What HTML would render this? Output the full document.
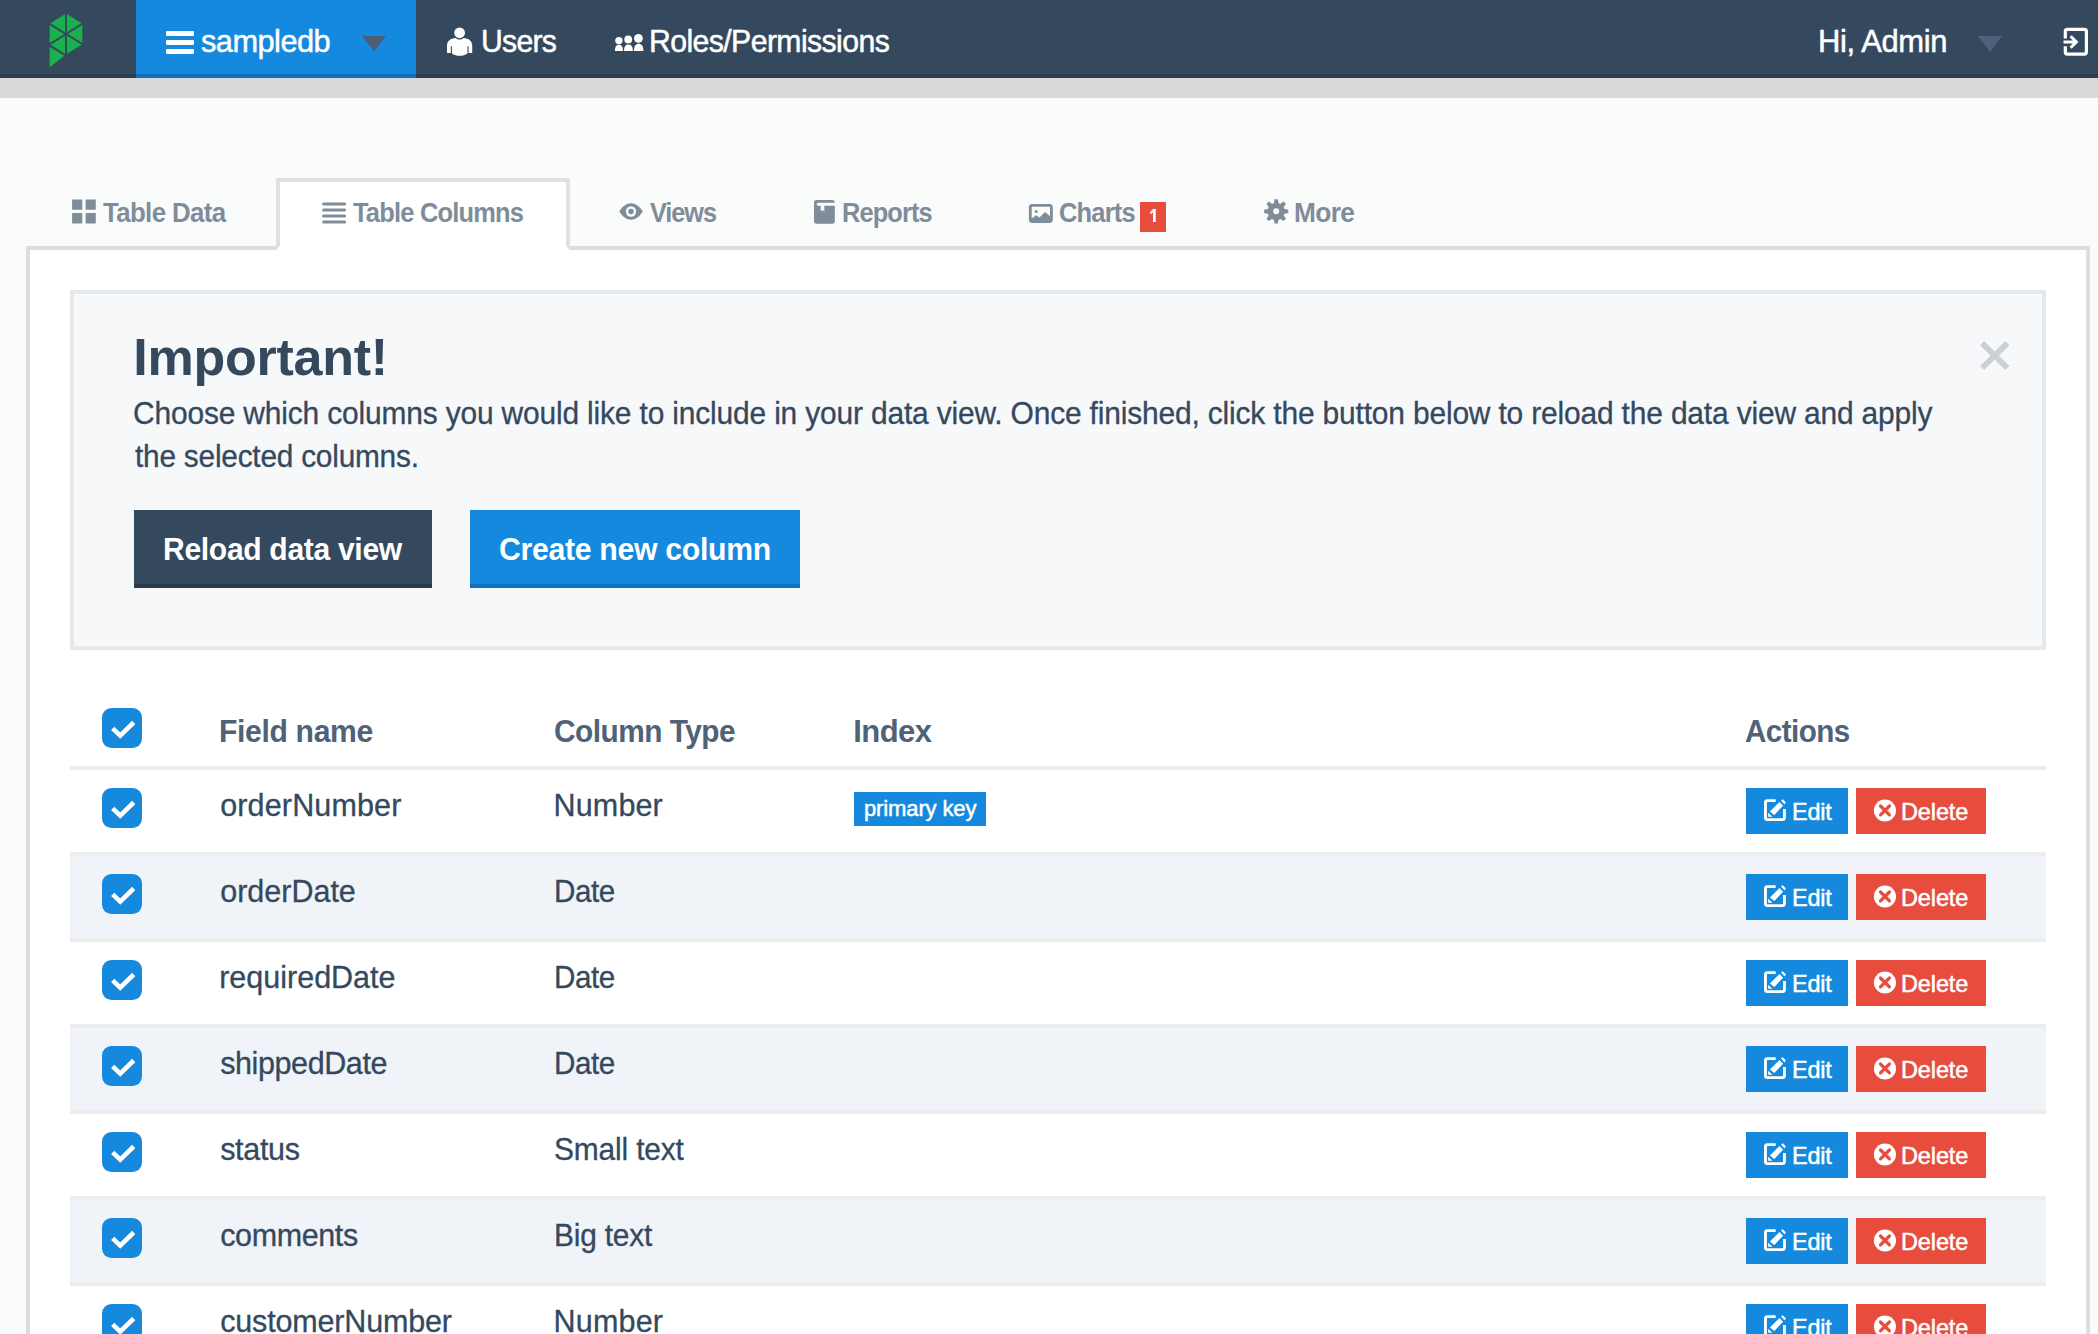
<!DOCTYPE html>
<html><head><meta charset="utf-8"><style>
html,body{margin:0;padding:0}
body{width:2098px;height:1334px;overflow:hidden;position:relative;background:#fafbfb;font-family:"Liberation Sans", sans-serif}
.t{position:absolute;white-space:nowrap;line-height:1}
svg{display:block;overflow:visible}
</style></head><body>
<div style="position:absolute;left:0px;top:0px;width:2098px;height:74px;background:#34495e;"></div>
<div style="position:absolute;left:0px;top:74px;width:2098px;height:4px;background:#2b3b4c;"></div>
<div style="position:absolute;left:136px;top:0px;width:280px;height:74px;background:#1489dd;"></div>
<div style="position:absolute;left:136px;top:74px;width:280px;height:4px;background:#1172bb;"></div>
<div style="position:absolute;left:0px;top:78px;width:2098px;height:20px;background:#d8d9d9;"></div>
<svg style="position:absolute;left:0px;top:0px" width="100" height="80"><g fill="#1ab04b" stroke="#34495e" stroke-width="1.9" stroke-linejoin="round"><polygon points="66,34 66,12.5 83.3,23.2"/><polygon points="66,34 83.3,23.2 83.3,44.8"/><polygon points="66,34 83.3,44.8 66,55.5"/><polygon points="66,34 66,55.5 48.7,44.8"/><polygon points="66,34 48.7,44.8 48.7,23.2"/><polygon points="66,34 48.7,23.2 66,12.5"/><polygon points="48.7,45.3 66,55.8 48.7,69.3"/></g></svg>
<div style="position:absolute;left:166px;top:31px;width:28px;height:5.299999999999997px;background:#fff;border-radius:1.2px"></div>
<div style="position:absolute;left:166px;top:40px;width:28px;height:5.299999999999997px;background:#fff;border-radius:1.2px"></div>
<div style="position:absolute;left:166px;top:49px;width:28px;height:5.299999999999997px;background:#fff;border-radius:1.2px"></div>
<svg style="position:absolute;left:361px;top:35px" width="26" height="17"><polygon points="1,1 25,1 13,16.5" fill="#4a5e76"/></svg>
<svg style="position:absolute;left:446px;top:27px" width="28" height="30"><circle cx="13.6" cy="5.8" r="5.4" fill="#fff"/><path d="M1,26 L1,18.5 C1,14.2 4.5,11.2 9.6,11 C11,12.1 12.3,12.6 13.6,12.6 C14.9,12.6 16.2,12.1 17.6,11 C22.7,11.2 26.2,14.2 26.2,18.5 L26.2,26 L22.6,26 L22.6,19.3 L21.5,19.3 L21.5,26.5 C19.5,28.3 16.5,28.8 13.6,28.8 C10.7,28.8 7.7,28.3 5.9,26.5 L5.9,19.3 L4.8,19.3 L4.8,26 Z" fill="#fff"/></svg>
<svg style="position:absolute;left:614px;top:33px" width="32" height="20"><g fill="#fff"><circle cx="4.9" cy="7.6" r="3.7"/><circle cx="14.2" cy="6.4" r="3.9"/><circle cx="24.4" cy="5.35" r="4.4"/><path d="M0.9,18 C0.9,13.5 2.6,11.8 4.95,11.8 C7.3,11.8 9,13.5 9,18 Z"/><path d="M10,18 C10,13.3 11.9,11.6 14.45,11.6 C17,11.6 18.9,13.3 18.9,18 Z"/><path d="M19.9,18 C19.9,12.6 22,10.7 24.65,10.7 C27.3,10.7 29.4,12.6 29.4,18 Z"/></g></svg>
<svg style="position:absolute;left:1977px;top:35px" width="26" height="18"><polygon points="1,1 25,1 13,17" fill="#4e627a"/></svg>
<svg style="position:absolute;left:2062px;top:27px" width="28" height="30"><path d="M3.3,11.4 L3.3,4.4 Q3.3,2.4 5.3,2.4 L22.4,2.4 Q24.4,2.4 24.4,4.4 L24.4,25.1 Q24.4,27.1 22.4,27.1 L5.3,27.1 Q3.3,27.1 3.3,25.1 L3.3,19.2" fill="none" stroke="#fff" stroke-width="3.2"/><path d="M1.5,15 L14,15 M8.6,9.2 L14.4,15 L8.6,20.8" fill="none" stroke="#fff" stroke-width="3"/></svg>
<div style="position:absolute;left:26px;top:246px;width:2064px;height:1154px;background:#fff;box-sizing:border-box;border:4px solid #dddddd;"></div>
<div style="position:absolute;left:276px;top:178px;width:294px;height:72px;background:#fff;box-sizing:border-box;border:4px solid #dfe2e5;border-bottom:4px solid #fff;"></div>
<svg style="position:absolute;left:71px;top:199px" width="26" height="26"><g fill="#7f8c99"><rect x="1.1" y="0.5" width="10.2" height="10.3" rx="0.6"/><rect x="14.6" y="0.5" width="10.2" height="10.3" rx="0.6"/><rect x="1.1" y="14.1" width="10.2" height="10.3" rx="0.6"/><rect x="14.6" y="14.1" width="10.2" height="10.3" rx="0.6"/></g></svg>
<svg style="position:absolute;left:321px;top:201px" width="27" height="24"><g fill="#7f8c99"><rect x="1.1" y="1.45" width="24" height="3.1" rx="1.5"/><rect x="1.1" y="7.45" width="24" height="3.1" rx="1.5"/><rect x="1.1" y="13.45" width="24" height="3.1" rx="1.5"/><rect x="1.1" y="19.45" width="24" height="3.1" rx="1.5"/></g></svg>
<svg style="position:absolute;left:619px;top:203px" width="25" height="18"><path d="M0.3,8.5 C3.5,3.3 7.5,0.3 12,0.3 C16.5,0.3 20.5,3.3 23.7,8.5 C20.5,13.7 16.5,16.7 12,16.7 C7.5,16.7 3.5,13.7 0.3,8.5 Z" fill="#7f8c99"/><circle cx="12" cy="8.5" r="5.2" fill="#fafbfb"/><circle cx="12" cy="8.5" r="2.7" fill="#7f8c99"/></svg>
<svg style="position:absolute;left:808px;top:194px" width="30" height="32"><rect x="6" y="5.9" width="20.8" height="23.8" rx="2.6" fill="#7f8c99"/><path d="M10.2,8.7 L28,8.7 L28,11.7 L16.3,11.7 L16.3,17.6 L14.5,16 L12.7,17.6 L12.7,11.7 L10.2,11.7 Q8.7,11.7 8.7,10.2 Q8.7,8.7 10.2,8.7Z" fill="#fafbfb"/></svg>
<svg style="position:absolute;left:1024px;top:196px" width="32" height="30"><rect x="6.3" y="9.35" width="21.1" height="16.1" rx="2" fill="none" stroke="#7f8c99" stroke-width="2.85"/><circle cx="12.2" cy="15.4" r="1.5" fill="#7f8c99"/><path d="M6.3,23.5 L12.2,19.3 L15.4,21.6 L21.1,15.9 L26.4,20.4 L26.4,25.5 L6.3,25.5Z" fill="#7f8c99"/></svg>
<div style="position:absolute;left:1140px;top:202px;width:26px;height:30px;background:#e74c3c;"></div>
<svg style="position:absolute;left:1140px;top:202px" width="26" height="30"><path d="M13,7 L15.7,7 L15.7,20 L13,20 L13,10.6 L10.9,12.3 L9.8,10.6 Z" fill="#fff"/></svg>
<svg style="position:absolute;left:1263px;top:199px" width="27" height="27"><g transform="translate(13.2,12.3)" fill="#7f8c99"><circle r="8.6"/><polygon points="-2.6,-7.5 2.6,-7.5 1.6,-12.1 -1.6,-12.1" transform="rotate(0)"/><polygon points="-2.6,-7.5 2.6,-7.5 1.6,-12.1 -1.6,-12.1" transform="rotate(45)"/><polygon points="-2.6,-7.5 2.6,-7.5 1.6,-12.1 -1.6,-12.1" transform="rotate(90)"/><polygon points="-2.6,-7.5 2.6,-7.5 1.6,-12.1 -1.6,-12.1" transform="rotate(135)"/><polygon points="-2.6,-7.5 2.6,-7.5 1.6,-12.1 -1.6,-12.1" transform="rotate(180)"/><polygon points="-2.6,-7.5 2.6,-7.5 1.6,-12.1 -1.6,-12.1" transform="rotate(225)"/><polygon points="-2.6,-7.5 2.6,-7.5 1.6,-12.1 -1.6,-12.1" transform="rotate(270)"/><polygon points="-2.6,-7.5 2.6,-7.5 1.6,-12.1 -1.6,-12.1" transform="rotate(315)"/><circle r="3" fill="#fafbfb"/></g></svg>
<div style="position:absolute;left:70px;top:290px;width:1976px;height:360px;background:#f7f8fa;box-sizing:border-box;border:4px solid #e6e9ec;"></div>
<svg style="position:absolute;left:1979px;top:340px" width="32" height="32"><path d="M3.1,3.1 L28.4,28 M28.4,3.1 L3.1,28" stroke="#ccd0d6" stroke-width="5.8"/></svg>
<div style="position:absolute;left:134px;top:510px;width:298px;height:78px;background:#34495e;box-sizing:border-box;border-bottom:4px solid #2c3b4b;"></div>
<div style="position:absolute;left:470px;top:510px;width:330px;height:78px;background:#1489dd;box-sizing:border-box;border-bottom:4px solid #1172bb;"></div>
<svg style="position:absolute;left:102px;top:708px" width="40" height="40"><rect x="0" y="0" width="40" height="40" rx="9.5" fill="#1489dd"/><polyline points="10.7,20.3 18.2,27.6 31.7,14.5" fill="none" stroke="#fff" stroke-width="4.6"/></svg>
<div style="position:absolute;left:70px;top:766px;width:1976px;height:4px;background:#eceeee;"></div>
<div style="position:absolute;left:70px;top:852px;width:1976px;height:4px;background:#eceeee;"></div>
<svg style="position:absolute;left:102px;top:788px" width="40" height="40"><rect x="0" y="0" width="40" height="40" rx="9.5" fill="#1489dd"/><polyline points="10.7,20.3 18.2,27.6 31.7,14.5" fill="none" stroke="#fff" stroke-width="4.6"/></svg>
<div style="position:absolute;left:1746px;top:788px;width:102px;height:46px;background:#1489dd;"></div>
<svg style="position:absolute;left:1760px;top:796px" width="30" height="28"><path d="M15.7,4.6 L7.4,4.6 Q5.45,4.6 5.45,6.6 L5.45,21.6 Q5.45,23.65 7.4,23.65 L22.5,23.65 Q24.45,23.65 24.45,21.6 L24.45,13" fill="none" stroke="#fff" stroke-width="2.9"/><polygon points="9.87,15.5 19.5,6.1 23.1,9.66 14.3,18.9" fill="#fff"/><polygon points="8.1,16.8 8.1,20.8 12.6,20.8" fill="#fff"/><polygon points="21,4.4 22.7,3.15 25.8,6.3 24.6,8.4" fill="#fff"/></svg>
<div style="position:absolute;left:1856px;top:788px;width:130px;height:46px;background:#e74c3c;"></div>
<svg style="position:absolute;left:1870px;top:796px" width="30" height="28"><circle cx="14.95" cy="14.45" r="11.05" fill="#fff"/><path d="M10.5,10 L19.4,18.9 M19.4,10 L10.5,18.9" stroke="#e74c3c" stroke-width="3.2" stroke-linecap="round"/></svg>
<div style="position:absolute;left:70px;top:856px;width:1976px;height:82px;background:#f0f3f7;"></div>
<div style="position:absolute;left:70px;top:938px;width:1976px;height:4px;background:#eceeee;"></div>
<svg style="position:absolute;left:102px;top:874px" width="40" height="40"><rect x="0" y="0" width="40" height="40" rx="9.5" fill="#1489dd"/><polyline points="10.7,20.3 18.2,27.6 31.7,14.5" fill="none" stroke="#fff" stroke-width="4.6"/></svg>
<div style="position:absolute;left:1746px;top:874px;width:102px;height:46px;background:#1489dd;"></div>
<svg style="position:absolute;left:1760px;top:882px" width="30" height="28"><path d="M15.7,4.6 L7.4,4.6 Q5.45,4.6 5.45,6.6 L5.45,21.6 Q5.45,23.65 7.4,23.65 L22.5,23.65 Q24.45,23.65 24.45,21.6 L24.45,13" fill="none" stroke="#fff" stroke-width="2.9"/><polygon points="9.87,15.5 19.5,6.1 23.1,9.66 14.3,18.9" fill="#fff"/><polygon points="8.1,16.8 8.1,20.8 12.6,20.8" fill="#fff"/><polygon points="21,4.4 22.7,3.15 25.8,6.3 24.6,8.4" fill="#fff"/></svg>
<div style="position:absolute;left:1856px;top:874px;width:130px;height:46px;background:#e74c3c;"></div>
<svg style="position:absolute;left:1870px;top:882px" width="30" height="28"><circle cx="14.95" cy="14.45" r="11.05" fill="#fff"/><path d="M10.5,10 L19.4,18.9 M19.4,10 L10.5,18.9" stroke="#e74c3c" stroke-width="3.2" stroke-linecap="round"/></svg>
<div style="position:absolute;left:70px;top:1024px;width:1976px;height:4px;background:#eceeee;"></div>
<svg style="position:absolute;left:102px;top:960px" width="40" height="40"><rect x="0" y="0" width="40" height="40" rx="9.5" fill="#1489dd"/><polyline points="10.7,20.3 18.2,27.6 31.7,14.5" fill="none" stroke="#fff" stroke-width="4.6"/></svg>
<div style="position:absolute;left:1746px;top:960px;width:102px;height:46px;background:#1489dd;"></div>
<svg style="position:absolute;left:1760px;top:968px" width="30" height="28"><path d="M15.7,4.6 L7.4,4.6 Q5.45,4.6 5.45,6.6 L5.45,21.6 Q5.45,23.65 7.4,23.65 L22.5,23.65 Q24.45,23.65 24.45,21.6 L24.45,13" fill="none" stroke="#fff" stroke-width="2.9"/><polygon points="9.87,15.5 19.5,6.1 23.1,9.66 14.3,18.9" fill="#fff"/><polygon points="8.1,16.8 8.1,20.8 12.6,20.8" fill="#fff"/><polygon points="21,4.4 22.7,3.15 25.8,6.3 24.6,8.4" fill="#fff"/></svg>
<div style="position:absolute;left:1856px;top:960px;width:130px;height:46px;background:#e74c3c;"></div>
<svg style="position:absolute;left:1870px;top:968px" width="30" height="28"><circle cx="14.95" cy="14.45" r="11.05" fill="#fff"/><path d="M10.5,10 L19.4,18.9 M19.4,10 L10.5,18.9" stroke="#e74c3c" stroke-width="3.2" stroke-linecap="round"/></svg>
<div style="position:absolute;left:70px;top:1028px;width:1976px;height:82px;background:#f0f3f7;"></div>
<div style="position:absolute;left:70px;top:1110px;width:1976px;height:4px;background:#eceeee;"></div>
<svg style="position:absolute;left:102px;top:1046px" width="40" height="40"><rect x="0" y="0" width="40" height="40" rx="9.5" fill="#1489dd"/><polyline points="10.7,20.3 18.2,27.6 31.7,14.5" fill="none" stroke="#fff" stroke-width="4.6"/></svg>
<div style="position:absolute;left:1746px;top:1046px;width:102px;height:46px;background:#1489dd;"></div>
<svg style="position:absolute;left:1760px;top:1054px" width="30" height="28"><path d="M15.7,4.6 L7.4,4.6 Q5.45,4.6 5.45,6.6 L5.45,21.6 Q5.45,23.65 7.4,23.65 L22.5,23.65 Q24.45,23.65 24.45,21.6 L24.45,13" fill="none" stroke="#fff" stroke-width="2.9"/><polygon points="9.87,15.5 19.5,6.1 23.1,9.66 14.3,18.9" fill="#fff"/><polygon points="8.1,16.8 8.1,20.8 12.6,20.8" fill="#fff"/><polygon points="21,4.4 22.7,3.15 25.8,6.3 24.6,8.4" fill="#fff"/></svg>
<div style="position:absolute;left:1856px;top:1046px;width:130px;height:46px;background:#e74c3c;"></div>
<svg style="position:absolute;left:1870px;top:1054px" width="30" height="28"><circle cx="14.95" cy="14.45" r="11.05" fill="#fff"/><path d="M10.5,10 L19.4,18.9 M19.4,10 L10.5,18.9" stroke="#e74c3c" stroke-width="3.2" stroke-linecap="round"/></svg>
<div style="position:absolute;left:70px;top:1196px;width:1976px;height:4px;background:#eceeee;"></div>
<svg style="position:absolute;left:102px;top:1132px" width="40" height="40"><rect x="0" y="0" width="40" height="40" rx="9.5" fill="#1489dd"/><polyline points="10.7,20.3 18.2,27.6 31.7,14.5" fill="none" stroke="#fff" stroke-width="4.6"/></svg>
<div style="position:absolute;left:1746px;top:1132px;width:102px;height:46px;background:#1489dd;"></div>
<svg style="position:absolute;left:1760px;top:1140px" width="30" height="28"><path d="M15.7,4.6 L7.4,4.6 Q5.45,4.6 5.45,6.6 L5.45,21.6 Q5.45,23.65 7.4,23.65 L22.5,23.65 Q24.45,23.65 24.45,21.6 L24.45,13" fill="none" stroke="#fff" stroke-width="2.9"/><polygon points="9.87,15.5 19.5,6.1 23.1,9.66 14.3,18.9" fill="#fff"/><polygon points="8.1,16.8 8.1,20.8 12.6,20.8" fill="#fff"/><polygon points="21,4.4 22.7,3.15 25.8,6.3 24.6,8.4" fill="#fff"/></svg>
<div style="position:absolute;left:1856px;top:1132px;width:130px;height:46px;background:#e74c3c;"></div>
<svg style="position:absolute;left:1870px;top:1140px" width="30" height="28"><circle cx="14.95" cy="14.45" r="11.05" fill="#fff"/><path d="M10.5,10 L19.4,18.9 M19.4,10 L10.5,18.9" stroke="#e74c3c" stroke-width="3.2" stroke-linecap="round"/></svg>
<div style="position:absolute;left:70px;top:1200px;width:1976px;height:82px;background:#f0f3f7;"></div>
<div style="position:absolute;left:70px;top:1282px;width:1976px;height:4px;background:#eceeee;"></div>
<svg style="position:absolute;left:102px;top:1218px" width="40" height="40"><rect x="0" y="0" width="40" height="40" rx="9.5" fill="#1489dd"/><polyline points="10.7,20.3 18.2,27.6 31.7,14.5" fill="none" stroke="#fff" stroke-width="4.6"/></svg>
<div style="position:absolute;left:1746px;top:1218px;width:102px;height:46px;background:#1489dd;"></div>
<svg style="position:absolute;left:1760px;top:1226px" width="30" height="28"><path d="M15.7,4.6 L7.4,4.6 Q5.45,4.6 5.45,6.6 L5.45,21.6 Q5.45,23.65 7.4,23.65 L22.5,23.65 Q24.45,23.65 24.45,21.6 L24.45,13" fill="none" stroke="#fff" stroke-width="2.9"/><polygon points="9.87,15.5 19.5,6.1 23.1,9.66 14.3,18.9" fill="#fff"/><polygon points="8.1,16.8 8.1,20.8 12.6,20.8" fill="#fff"/><polygon points="21,4.4 22.7,3.15 25.8,6.3 24.6,8.4" fill="#fff"/></svg>
<div style="position:absolute;left:1856px;top:1218px;width:130px;height:46px;background:#e74c3c;"></div>
<svg style="position:absolute;left:1870px;top:1226px" width="30" height="28"><circle cx="14.95" cy="14.45" r="11.05" fill="#fff"/><path d="M10.5,10 L19.4,18.9 M19.4,10 L10.5,18.9" stroke="#e74c3c" stroke-width="3.2" stroke-linecap="round"/></svg>
<div style="position:absolute;left:70px;top:1368px;width:1976px;height:4px;background:#eceeee;"></div>
<svg style="position:absolute;left:102px;top:1304px" width="40" height="40"><rect x="0" y="0" width="40" height="40" rx="9.5" fill="#1489dd"/><polyline points="10.7,20.3 18.2,27.6 31.7,14.5" fill="none" stroke="#fff" stroke-width="4.6"/></svg>
<div style="position:absolute;left:1746px;top:1304px;width:102px;height:46px;background:#1489dd;"></div>
<svg style="position:absolute;left:1760px;top:1312px" width="30" height="28"><path d="M15.7,4.6 L7.4,4.6 Q5.45,4.6 5.45,6.6 L5.45,21.6 Q5.45,23.65 7.4,23.65 L22.5,23.65 Q24.45,23.65 24.45,21.6 L24.45,13" fill="none" stroke="#fff" stroke-width="2.9"/><polygon points="9.87,15.5 19.5,6.1 23.1,9.66 14.3,18.9" fill="#fff"/><polygon points="8.1,16.8 8.1,20.8 12.6,20.8" fill="#fff"/><polygon points="21,4.4 22.7,3.15 25.8,6.3 24.6,8.4" fill="#fff"/></svg>
<div style="position:absolute;left:1856px;top:1304px;width:130px;height:46px;background:#e74c3c;"></div>
<svg style="position:absolute;left:1870px;top:1312px" width="30" height="28"><circle cx="14.95" cy="14.45" r="11.05" fill="#fff"/><path d="M10.5,10 L19.4,18.9 M19.4,10 L10.5,18.9" stroke="#e74c3c" stroke-width="3.2" stroke-linecap="round"/></svg>
<div style="position:absolute;left:854px;top:792px;width:132px;height:34px;background:#1489dd;"></div>
<div class="t" style="left:200.54px;top:24.80px;font-size:32px;font-weight:normal;color:#fff;letter-spacing:-0.535px;-webkit-text-stroke:0.5px currentColor;transform:scaleX(0.9606);transform-origin:0 0;">sampledb</div>
<div class="t" style="left:480.51px;top:25.10px;font-size:32px;font-weight:normal;color:#fff;letter-spacing:-0.795px;-webkit-text-stroke:0.5px currentColor;transform:scaleX(0.9437);transform-origin:0 0;">Users</div>
<div class="t" style="left:649.17px;top:25.00px;font-size:32px;font-weight:normal;color:#fff;letter-spacing:-0.635px;-webkit-text-stroke:0.5px currentColor;transform:scaleX(0.9448);transform-origin:0 0;">Roles/Permissions</div>
<div class="t" style="left:1818.10px;top:25.00px;font-size:32px;font-weight:normal;color:#fff;letter-spacing:-0.383px;-webkit-text-stroke:0.5px currentColor;transform:scaleX(0.9664);transform-origin:0 0;">Hi, Admin</div>
<div class="t" style="left:103.00px;top:198.93px;font-size:27.5px;font-weight:bold;color:#7f8c99;letter-spacing:-0.663px;transform:scaleX(0.9387);transform-origin:0 0;">Table Data</div>
<div class="t" style="left:353.00px;top:198.93px;font-size:27.5px;font-weight:bold;color:#7f8c99;letter-spacing:-0.864px;transform:scaleX(0.9258);transform-origin:0 0;">Table Columns</div>
<div class="t" style="left:649.80px;top:198.93px;font-size:27.5px;font-weight:bold;color:#7f8c99;letter-spacing:-1.144px;transform:scaleX(0.9182);transform-origin:0 0;">Views</div>
<div class="t" style="left:842.15px;top:198.93px;font-size:27.5px;font-weight:bold;color:#7f8c99;letter-spacing:-0.939px;transform:scaleX(0.9228);transform-origin:0 0;">Reports</div>
<div class="t" style="left:1058.87px;top:198.93px;font-size:27.5px;font-weight:bold;color:#7f8c99;letter-spacing:-0.898px;transform:scaleX(0.9266);transform-origin:0 0;">Charts</div>
<div class="t" style="left:1293.79px;top:198.93px;font-size:27.5px;font-weight:bold;color:#7f8c99;letter-spacing:-0.656px;transform:scaleX(0.9552);transform-origin:0 0;">More</div>
<div class="t" style="left:133.30px;top:331.10px;font-size:52px;font-weight:bold;color:#34495e;letter-spacing:-0.256px;">Important!</div>
<div class="t" style="left:133.04px;top:398.07px;font-size:30.5px;font-weight:normal;color:#34495e;letter-spacing:-0.171px;-webkit-text-stroke:0.3px currentColor;transform:scaleX(0.9816);transform-origin:0 0;">Choose which columns you would like to include in your data view. Once finished, click the button below to reload the data view and apply</div>
<div class="t" style="left:135.00px;top:441.07px;font-size:30.5px;font-weight:normal;color:#34495e;letter-spacing:-0.225px;-webkit-text-stroke:0.3px currentColor;transform:scaleX(0.9774);transform-origin:0 0;">the selected columns.</div>
<div class="t" style="left:163.06px;top:533.65px;font-size:31px;font-weight:bold;color:#fff;letter-spacing:-0.338px;transform:scaleX(0.9705);transform-origin:0 0;">Reload data view</div>
<div class="t" style="left:499.03px;top:533.65px;font-size:31px;font-weight:bold;color:#fff;letter-spacing:-0.308px;transform:scaleX(0.9744);transform-origin:0 0;">Create new column</div>
<div class="t" style="left:219.36px;top:715.65px;font-size:31px;font-weight:bold;color:#4f6277;letter-spacing:-0.348px;transform:scaleX(0.9713);transform-origin:0 0;">Field name</div>
<div class="t" style="left:554.34px;top:715.65px;font-size:31px;font-weight:bold;color:#4f6277;letter-spacing:-0.512px;transform:scaleX(0.9616);transform-origin:0 0;">Column Type</div>
<div class="t" style="left:853.30px;top:715.65px;font-size:31px;font-weight:bold;color:#4f6277;letter-spacing:-0.575px;">Index</div>
<div class="t" style="left:1745.05px;top:715.95px;font-size:31px;font-weight:bold;color:#4f6277;letter-spacing:-0.586px;transform:scaleX(0.9550);transform-origin:0 0;">Actions</div>
<div class="t" style="left:863.82px;top:797.58px;font-size:22.5px;font-weight:normal;color:#fff;letter-spacing:-0.155px;-webkit-text-stroke:0.5px currentColor;transform:scaleX(0.9802);transform-origin:0 0;">primary key</div>
<div class="t" style="left:220.20px;top:790.08px;font-size:30.5px;font-weight:normal;color:#34495e;letter-spacing:0.15px;-webkit-text-stroke:0.3px currentColor;">orderNumber</div>
<div class="t" style="left:553.50px;top:790.08px;font-size:30.5px;font-weight:normal;color:#34495e;letter-spacing:0.16px;-webkit-text-stroke:0.3px currentColor;">Number</div>
<div class="t" style="left:1791.55px;top:799.90px;font-size:24px;font-weight:normal;color:#fff;letter-spacing:-0.205px;-webkit-text-stroke:0.5px currentColor;transform:scaleX(0.9769);transform-origin:0 0;">Edit</div>
<div class="t" style="left:1901.34px;top:799.90px;font-size:24px;font-weight:normal;color:#fff;letter-spacing:-0.163px;-webkit-text-stroke:0.5px currentColor;transform:scaleX(0.9818);transform-origin:0 0;">Delete</div>
<div class="t" style="left:220.20px;top:876.08px;font-size:30.5px;font-weight:normal;color:#34495e;letter-spacing:0.0px;-webkit-text-stroke:0.3px currentColor;">orderDate</div>
<div class="t" style="left:553.56px;top:876.08px;font-size:30.5px;font-weight:normal;color:#34495e;letter-spacing:-0.412px;-webkit-text-stroke:0.3px currentColor;transform:scaleX(0.9705);transform-origin:0 0;">Date</div>
<div class="t" style="left:1791.55px;top:885.90px;font-size:24px;font-weight:normal;color:#fff;letter-spacing:-0.205px;-webkit-text-stroke:0.5px currentColor;transform:scaleX(0.9769);transform-origin:0 0;">Edit</div>
<div class="t" style="left:1901.34px;top:885.90px;font-size:24px;font-weight:normal;color:#fff;letter-spacing:-0.163px;-webkit-text-stroke:0.5px currentColor;transform:scaleX(0.9818);transform-origin:0 0;">Delete</div>
<div class="t" style="left:219.20px;top:962.08px;font-size:30.5px;font-weight:normal;color:#34495e;letter-spacing:0.0px;-webkit-text-stroke:0.3px currentColor;">requiredDate</div>
<div class="t" style="left:553.56px;top:962.08px;font-size:30.5px;font-weight:normal;color:#34495e;letter-spacing:-0.412px;-webkit-text-stroke:0.3px currentColor;transform:scaleX(0.9705);transform-origin:0 0;">Date</div>
<div class="t" style="left:1791.55px;top:971.90px;font-size:24px;font-weight:normal;color:#fff;letter-spacing:-0.205px;-webkit-text-stroke:0.5px currentColor;transform:scaleX(0.9769);transform-origin:0 0;">Edit</div>
<div class="t" style="left:1901.34px;top:971.90px;font-size:24px;font-weight:normal;color:#fff;letter-spacing:-0.163px;-webkit-text-stroke:0.5px currentColor;transform:scaleX(0.9818);transform-origin:0 0;">Delete</div>
<div class="t" style="left:220.20px;top:1048.08px;font-size:30.5px;font-weight:normal;color:#34495e;letter-spacing:-0.4px;-webkit-text-stroke:0.3px currentColor;">shippedDate</div>
<div class="t" style="left:553.56px;top:1048.08px;font-size:30.5px;font-weight:normal;color:#34495e;letter-spacing:-0.412px;-webkit-text-stroke:0.3px currentColor;transform:scaleX(0.9705);transform-origin:0 0;">Date</div>
<div class="t" style="left:1791.55px;top:1057.90px;font-size:24px;font-weight:normal;color:#fff;letter-spacing:-0.205px;-webkit-text-stroke:0.5px currentColor;transform:scaleX(0.9769);transform-origin:0 0;">Edit</div>
<div class="t" style="left:1901.34px;top:1057.90px;font-size:24px;font-weight:normal;color:#fff;letter-spacing:-0.163px;-webkit-text-stroke:0.5px currentColor;transform:scaleX(0.9818);transform-origin:0 0;">Delete</div>
<div class="t" style="left:220.20px;top:1134.08px;font-size:30.5px;font-weight:normal;color:#34495e;letter-spacing:-0.32px;-webkit-text-stroke:0.3px currentColor;">status</div>
<div class="t" style="left:553.54px;top:1134.08px;font-size:30.5px;font-weight:normal;color:#34495e;letter-spacing:-0.181px;-webkit-text-stroke:0.3px currentColor;transform:scaleX(0.9818);transform-origin:0 0;">Small text</div>
<div class="t" style="left:1791.55px;top:1143.90px;font-size:24px;font-weight:normal;color:#fff;letter-spacing:-0.205px;-webkit-text-stroke:0.5px currentColor;transform:scaleX(0.9769);transform-origin:0 0;">Edit</div>
<div class="t" style="left:1901.34px;top:1143.90px;font-size:24px;font-weight:normal;color:#fff;letter-spacing:-0.163px;-webkit-text-stroke:0.5px currentColor;transform:scaleX(0.9818);transform-origin:0 0;">Delete</div>
<div class="t" style="left:220.20px;top:1220.08px;font-size:30.5px;font-weight:normal;color:#34495e;letter-spacing:-0.386px;-webkit-text-stroke:0.3px currentColor;">comments</div>
<div class="t" style="left:553.54px;top:1220.08px;font-size:30.5px;font-weight:normal;color:#34495e;letter-spacing:-0.198px;-webkit-text-stroke:0.3px currentColor;transform:scaleX(0.9796);transform-origin:0 0;">Big text</div>
<div class="t" style="left:1791.55px;top:1229.90px;font-size:24px;font-weight:normal;color:#fff;letter-spacing:-0.205px;-webkit-text-stroke:0.5px currentColor;transform:scaleX(0.9769);transform-origin:0 0;">Edit</div>
<div class="t" style="left:1901.34px;top:1229.90px;font-size:24px;font-weight:normal;color:#fff;letter-spacing:-0.163px;-webkit-text-stroke:0.5px currentColor;transform:scaleX(0.9818);transform-origin:0 0;">Delete</div>
<div class="t" style="left:220.20px;top:1306.08px;font-size:30.5px;font-weight:normal;color:#34495e;letter-spacing:-0.162px;-webkit-text-stroke:0.3px currentColor;">customerNumber</div>
<div class="t" style="left:553.50px;top:1306.08px;font-size:30.5px;font-weight:normal;color:#34495e;letter-spacing:0.2px;-webkit-text-stroke:0.3px currentColor;">Number</div>
<div class="t" style="left:1791.55px;top:1315.90px;font-size:24px;font-weight:normal;color:#fff;letter-spacing:-0.205px;-webkit-text-stroke:0.5px currentColor;transform:scaleX(0.9769);transform-origin:0 0;">Edit</div>
<div class="t" style="left:1901.34px;top:1315.90px;font-size:24px;font-weight:normal;color:#fff;letter-spacing:-0.163px;-webkit-text-stroke:0.5px currentColor;transform:scaleX(0.9818);transform-origin:0 0;">Delete</div>
</body></html>
